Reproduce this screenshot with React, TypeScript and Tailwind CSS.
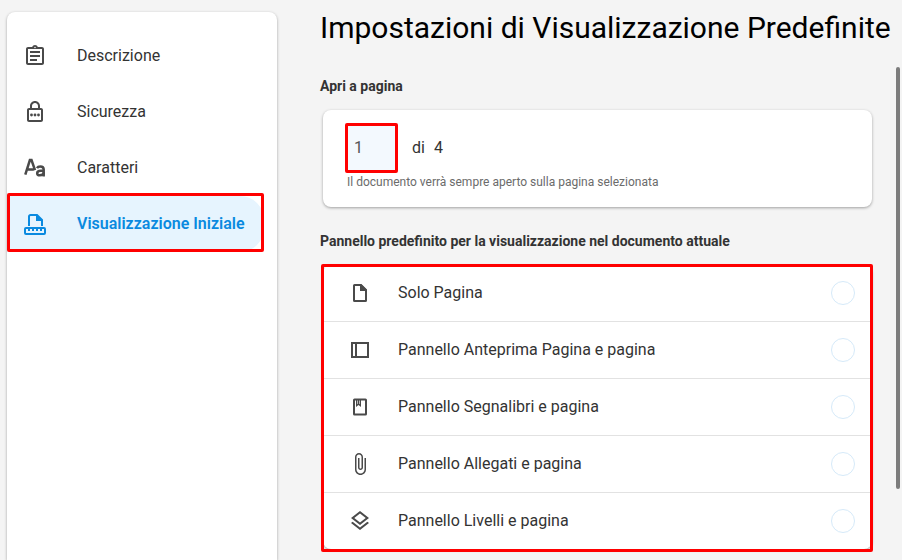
import type { ReactNode } from "react";
import clsx from "clsx";

function Icon({ children }: { children: ReactNode }) {
  return (
    <svg width="24" height="24" viewBox="0 0 24 24" fill="currentColor" aria-hidden="true" className="shrink-0">
      {children}
    </svg>
  );
}

const navItems = [
  {
    label: "Descrizione",
    icon: (
      <path d="M7 15h7v2H7zm0-4h10v2H7zm0-4h10v2H7zm12-4h-4.18C14.4 1.84 13.3 1 12 1s-2.4.84-2.82 2H5c-1.1 0-2 .9-2 2v14c0 1.1.9 2 2 2h14c1.1 0 2-.9 2-2V5c0-1.1-.9-2-2-2zm-7-.25c.41 0 .75.34.75.75s-.34.75-.75.75-.75-.34-.75-.75.34-.75.75-.75zM19 19H5V5h14v14z" />
    ),
  },
  {
    label: "Sicurezza",
    icon: (
      <>
        <path d="M18 8h-1V6c0-2.76-2.24-5-5-5S7 3.24 7 6v2H6c-1.1 0-2 .9-2 2v10c0 1.1.9 2 2 2h12c1.1 0 2-.9 2-2V10c0-1.1-.9-2-2-2zM9 6c0-1.66 1.34-3 3-3s3 1.34 3 3v2H9V6zm9 14H6V10h12v10z" />
        <circle cx="8.5" cy="15" r="1.4" />
        <circle cx="12" cy="15" r="1.4" />
        <circle cx="15.5" cy="15" r="1.4" />
      </>
    ),
  },
  {
    label: "Caratteri",
    icon: (
      <g fill="none" stroke="currentColor" strokeWidth="2.5">
        <path d="M2.3 18.6 6.9 4h1.6L12 14.2M4.3 13.600h6.400" />
        <path d="M14 12.200c.6-1.100 1.700-1.600 3.300-1.600 2.200 0 3.400 1 3.400 3V20.500" />
        <path d="M20.700 14.800h-2.900c-2.400 0-3.600.8-3.600 2.400 0 1.400 1 2.100 2.600 2.100 2.300 0 3.900-1.100 3.900-3" />
      </g>
    ),
  },
  {
    label: "Visualizzazione Iniziale",
    active: true,
    icon: (
      <>
        <path d="M6 14V4.500C6 3.700 6.700 3 7.500 3H14l5 5v6" fill="none" stroke="currentColor" strokeWidth="2" />
        <path d="M13 2 20 9h-7z" />
        <rect x="2" y="16" width="20" height="6" rx="1" fill="none" stroke="currentColor" strokeWidth="2" />
        <path d="M5 16h2v3H5zm4 0h2v3H9zm4 0h2v3h-2zm4 0h2v3h-2z" />
      </>
    ),
  },
];

const panels = [
  {
    id: "page",
    label: "Solo Pagina",
    icon: (
      <>
        <path
          d="M6.500 4H13l5 5v10.500a.5.5 0 0 1-.5.5h-11a.5.5 0 0 1-.5-.5v-15a.5.5 0 0 1 .5-.5z"
          fill="none"
          stroke="currentColor"
          strokeWidth="2"
        />
        <path d="M12 3.500h1.500L19 9v1h-7z" />
      </>
    ),
  },
  {
    id: "thumbnails",
    label: "Pannello Anteprima Pagina e pagina",
    icon: <path d="M3 4v16h18V4H3zm2 2h2v12H5V6zm14 12H9V6h10v12z" />,
  },
  {
    id: "bookmarks",
    label: "Pannello Segnalibri e pagina",
    icon: (
      <>
        <rect x="6" y="4.500" width="12" height="15" rx="0.500" fill="none" stroke="currentColor" strokeWidth="2" />
        <path d="M8 5v7l2.500-2 2.500 2V5h-1.300v4.200l-.6-.5V5H9.900v3.700l-.6.5V5z" />
      </>
    ),
  },
  {
    id: "attachments",
    label: "Pannello Allegati e pagina",
    icon: (
      <path d="M16.500 6v11.500c0 2.210-1.790 4-4 4s-4-1.790-4-4V5c0-1.380 1.120-2.500 2.500-2.500s2.500 1.120 2.500 2.500v10.500c0 .55-.45 1-1 1s-1-.45-1-1V6H10v9.500c0 1.380 1.120 2.500 2.500 2.500s2.500-1.120 2.500-2.500V5c0-2.210-1.790-4-4-4S7 2.790 7 5v12.500c0 3.040 2.460 5.500 5.500 5.500s5.500-2.460 5.500-5.500V6h-1.500z" />
    ),
  },
  {
    id: "layers",
    label: "Pannello Livelli e pagina",
    icon: (
      <path d="M11.990 18.540l-7.370-5.730L3 14.070l9 7 9-7-1.630-1.270-7.380 5.740zM12 16l7.360-5.730L21 9l-9-7-9 7 1.630 1.270L12 16zm0-11.470L17.740 9 12 13.470 6.260 9 12 4.530z" />
    ),
  },
];

// Red frame drawn over the area being pointed out
function Highlight({ className }: { className: string }) {
  return <span className={clsx("pointer-events-none absolute rounded-xs border-3 border-[#ff0000]", className)} />;
}

function Sidebar() {
  return (
    <nav className="mt-3 ml-[7px] w-[270px] shrink-0 rounded-t-lg bg-white pt-4 shadow-[0_1px_3px_rgba(0,0,0,0.35)]">
      {navItems.map((item) => (
        <a
          key={item.label}
          href="#"
          className={clsx(
            "relative mr-[13px] flex h-14 items-center gap-[30px] rounded-r-3xl pl-4 text-base",
            item.active ? "bg-[#e6f4fe] font-semibold text-[#0a8ae0]" : "text-[#333333]"
          )}
        >
          <span className={item.active ? "" : "text-[#4a4a4a]"}>
            <Icon>{item.icon}</Icon>
          </span>
          {item.label}
          {item.active && <Highlight className="inset-x-0 -top-[3px] bottom-0" />}
        </a>
      ))}
    </nav>
  );
}

export default function App() {
  return (
    <div className="flex h-screen overflow-hidden bg-[#f4f4f4] font-[Roboto,sans-serif] text-[#333333]">
      <Sidebar />

      <main className="ml-[43px] flex min-w-0 flex-1 flex-col">
        <h1 className="pt-2 text-[30px] leading-10 whitespace-nowrap text-black">
          Impostazioni di Visualizzazione Predefinite
        </h1>

        <div className="mt-[19px] flex min-h-0 flex-1">
          <div className="min-w-0 flex-1 pt-[7px]">
            <h2 className="text-sm leading-6 font-bold">Apri a pagina</h2>
            <section className="mt-3 mr-6 ml-[3px] rounded-lg bg-white px-6 pt-4 pb-[15px] shadow-[0_1px_3px_rgba(0,0,0,0.35)]">
              <div className="flex items-center gap-[17px]">
                <div className="relative flex">
                  <input
                    type="text"
                    defaultValue="1"
                    aria-label="Apri a pagina"
                    className="h-11 w-12 bg-[#f3f9fe] px-[7px] pb-0.5 text-base text-[#555555] outline-none"
                  />
                  <Highlight className="-inset-y-[3px] -right-[3px] -left-0.5" />
                </div>
                <span className="flex gap-[9px]">
                  <span>di</span>
                  <span>4</span>
                </span>
              </div>
              <p className="mt-0.5 text-xs leading-5 text-[#6b6b6b]">
                Il documento verrà sempre aperto sulla pagina selezionata
              </p>
            </section>

            <h2 className="mt-[22px] text-sm leading-6 font-bold">
              Pannello predefinito per la visualizzazione nel documento attuale
            </h2>
            <div className="relative mt-3 mr-6 ml-[3px]">
              <ul className="divide-y divide-[#e2e2e2] rounded-lg bg-white shadow-[0_1px_3px_rgba(0,0,0,0.35)]">
                {panels.map((panel) => (
                  <li key={panel.id}>
                    <label htmlFor={panel.id} className="flex h-14 items-center pr-[17px] pl-[25px]">
                      <span className="text-[#4a4a4a]">
                        <Icon>{panel.icon}</Icon>
                      </span>
                      <span className="ml-[26px] flex-1">{panel.label}</span>
                      <input
                        id={panel.id}
                        type="radio"
                        name="panel"
                        className="size-6 appearance-none rounded-full border border-[#d6eaf9] checked:border-8 checked:border-[#0a8ae0]"
                      />
                    </label>
                  </li>
                ))}
              </ul>
              <Highlight className="-top-px -right-px -bottom-[3px] -left-0.5" />
            </div>
          </div>

          {/* Scrollbar thumb */}
          <div className="mr-0.5 h-[422px] w-1 shrink-0 rounded-full bg-[#7c7c7c]" />
        </div>
      </main>
    </div>
  );
}
